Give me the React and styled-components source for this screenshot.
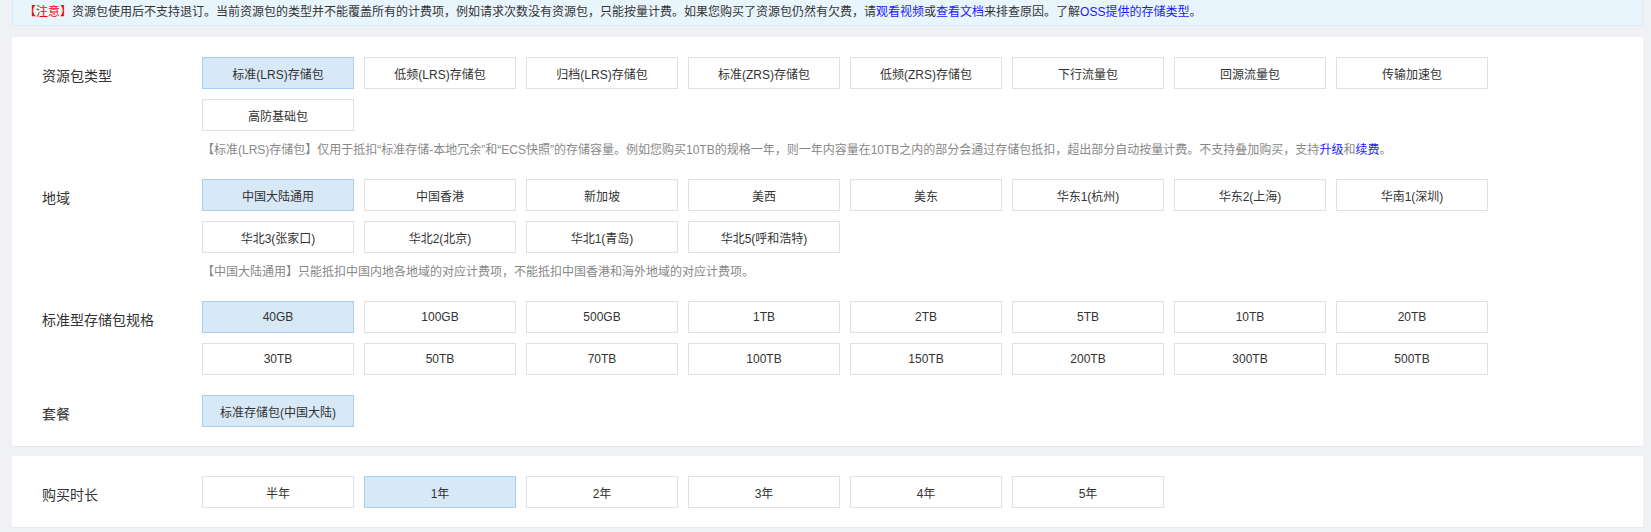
import React from "react";
import styled, { createGlobalStyle } from "styled-components";

const Global = createGlobalStyle`
  html, body { margin: 0; padding: 0; background: #f0f1f4; }
  body {
    font-family: "Liberation Sans", Arial, "Noto Sans CJK SC", sans-serif;
    color: #333;
  }
`;

const Page = styled.div`
  padding: 0 8px 8px 12px;
`;

const Notice = styled.div`
  height: 25px;
  line-height: 24px;
  background: #e9f5fd;
  border-bottom: 1px solid #dcebf6;
  border-left: 1px solid #dcebf6;
  border-right: 1px solid #dcebf6;
  font-size: 12px;
  color: #333;
  padding-left: 11px;
  white-space: nowrap;
  overflow: hidden;
`;

const Warn = styled.span`
  color: #f00;
`;

const Link = styled.a`
  color: #1a1aff;
  text-decoration: none;
`;

const Card = styled.div`
  background: #fff;
  border-bottom: 1px solid #e8e9ec;
  margin-top: ${(p) => p.$top}px;
  padding: 20px 0 9px;
`;

const Field = styled.div`
  display: flex;
  align-items: flex-start;
  margin-bottom: ${(p) => (p.$last ? 0 : 10)}px;
`;

const Label = styled.div`
  width: 160px;
  flex: none;
  padding-left: 30px;
  padding-top: 3px;
  line-height: 32px;
  font-size: 14px;
  color: #333;
`;

const Body = styled.div`
  flex: 1;
  min-width: 0;
`;

const Options = styled.div`
  display: flex;
  flex-wrap: wrap;
  max-width: 1296px;
`;

const Option = styled.div`
  box-sizing: border-box;
  width: 152px;
  height: 32px;
  margin: 0 10px 10px 0;
  border: 1px solid ${(p) => (p.$active ? "#a9cff0" : "#e1e1e1")};
  background: ${(p) => (p.$active ? "#d7e8f6" : "#fff")};
  display: flex;
  align-items: center;
  justify-content: center;
  font-size: 12px;
  color: #333;
  cursor: pointer;
  white-space: nowrap;
`;

const Desc = styled.div`
  font-size: 12px;
  line-height: 18px;
  margin-bottom: 10px;
  color: #888;
  white-space: nowrap;
`;

const types = [
  "标准(LRS)存储包",
  "低频(LRS)存储包",
  "归档(LRS)存储包",
  "标准(ZRS)存储包",
  "低频(ZRS)存储包",
  "下行流量包",
  "回源流量包",
  "传输加速包",
  "高防基础包",
];

const regions = [
  "中国大陆通用",
  "中国香港",
  "新加坡",
  "美西",
  "美东",
  "华东1(杭州)",
  "华东2(上海)",
  "华南1(深圳)",
  "华北3(张家口)",
  "华北2(北京)",
  "华北1(青岛)",
  "华北5(呼和浩特)",
];

const specs = [
  "40GB", "100GB", "500GB", "1TB", "2TB", "5TB", "10TB", "20TB",
  "30TB", "50TB", "70TB", "100TB", "150TB", "200TB", "300TB", "500TB",
];

const durations = ["半年", "1年", "2年", "3年", "4年", "5年"];

function OptionGroup({ items, active }) {
  return (
    <Options>
      {items.map((t) => (
        <Option key={t} $active={t === active}>
          {t}
        </Option>
      ))}
    </Options>
  );
}

export default function App() {
  return (
    <>
      <Global />
      <Page>
        <Notice>
          <Warn>【注意】</Warn>资源包使用后不支持退订。当前资源包的类型并不能覆盖所有的计费项，例如请求次数没有资源包，只能按量计费。如果您购买了资源包仍然有欠费，请
          <Link>观看视频</Link>或<Link>查看文档</Link>来排查原因。了解<Link>OSS提供的存储类型</Link>。
        </Notice>

        <Card $top={11}>
          <Field>
            <Label>资源包类型</Label>
            <Body>
              <OptionGroup items={types} active="标准(LRS)存储包" />
              <Desc>
                【标准(LRS)存储包】仅用于抵扣“标准存储-本地冗余”和“ECS快照”的存储容量。例如您购买10TB的规格一年，则一年内容量在10TB之内的部分会通过存储包抵扣，超出部分自动按量计费。不支持叠加购买，支持
                <Link>升级</Link>和<Link>续费</Link>。
              </Desc>
            </Body>
          </Field>
          <Field>
            <Label>地域</Label>
            <Body>
              <OptionGroup items={regions} active="中国大陆通用" />
              <Desc>【中国大陆通用】只能抵扣中国内地各地域的对应计费项，不能抵扣中国香港和海外地域的对应计费项。</Desc>
            </Body>
          </Field>
          <Field>
            <Label>标准型存储包规格</Label>
            <Body>
              <OptionGroup items={specs} active="40GB" />
            </Body>
          </Field>
          <Field $last>
            <Label>套餐</Label>
            <Body>
              <OptionGroup items={["标准存储包(中国大陆)"]} active="标准存储包(中国大陆)" />
            </Body>
          </Field>
        </Card>

        <Card $top={9}>
          <Field $last>
            <Label>购买时长</Label>
            <Body>
              <OptionGroup items={durations} active="1年" />
            </Body>
          </Field>
        </Card>
      </Page>
    </>
  );
}
